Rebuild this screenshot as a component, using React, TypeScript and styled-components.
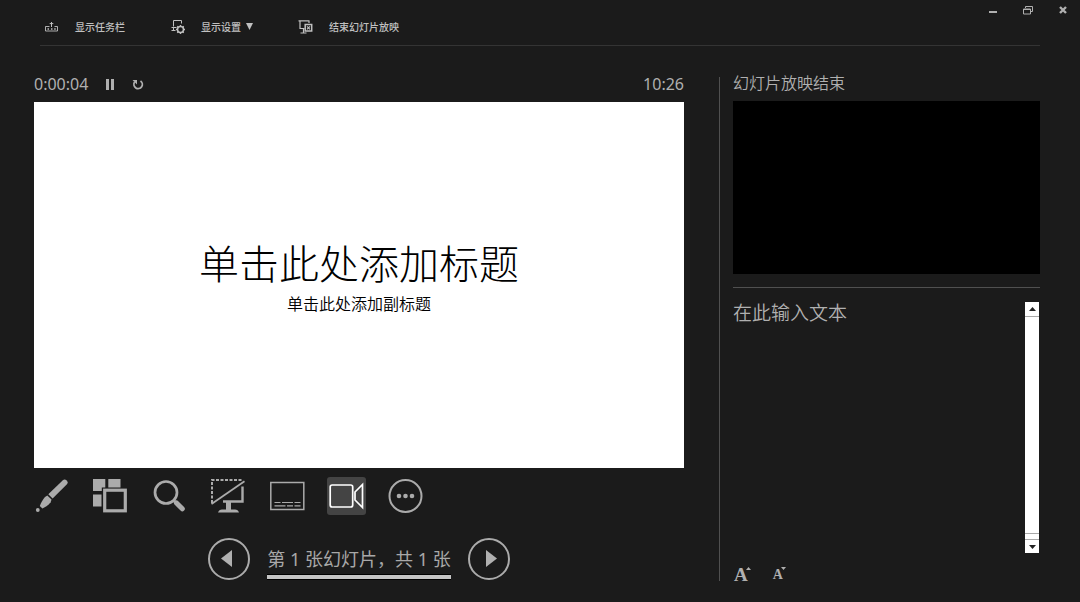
import React from "react";
import styled, { createGlobalStyle } from "styled-components";

const GlobalStyle = createGlobalStyle`
  *, *::before, *::after { box-sizing: border-box; }
  body {
    margin: 0;
    background: #1b1b1b;
    color: #b0b0b0;
    font-family: "Noto Sans", "Noto Sans CJK SC", sans-serif;
  }
  button {
    padding: 0;
    border: 0;
    background: none;
    color: inherit;
    font: inherit;
    cursor: pointer;
  }
  svg { display: block; flex: none; }
`;

const Page = styled.div`
  display: flex;
  flex-direction: column;
  min-height: 100vh;
`;

const Header = styled.header`
  display: grid;
  height: 46px;
`;

const Commands = styled.nav`
  grid-area: 1 / 1;
  display: flex;
  gap: 45px;
  margin: 0 40px;
  padding: 8px 4px 0;
  border-bottom: 1px solid #343434;
`;

const Command = styled.button`
  display: flex;
  align-items: center;
  gap: 15px;
  font-size: 10px;
  font-weight: 500;
  line-height: 16px;
  color: #c0c0c0;
`;

const Label = styled.span`
  display: flex;
  align-items: center;
  gap: 5px;
`;

const WindowControls = styled.div`
  grid-area: 1 / 1;
  place-self: start end;
  display: flex;
`;

const WindowButton = styled.button`
  display: grid;
  place-items: center;
  width: 35px;
  height: 20px;
`;

const Main = styled.main`
  flex: 1;
  display: grid;
  grid-template-columns: minmax(0, 650fr) minmax(0, 321fr);
  column-gap: 35px;
  padding: 26px 40px 21px 34px;
`;

const Stage = styled.section`
  display: flex;
  flex-direction: column;
`;

const Status = styled.div`
  display: flex;
  align-items: center;
  height: 24px;
  margin-bottom: 6px;
  font-size: 16px;
`;

const Clock = styled.time`
  margin-left: auto;
`;

const TimerButton = styled.button`
  display: grid;
  place-items: center;
  width: 28px;
  height: 24px;
`;

const TimerControls = styled.div`
  display: flex;
  margin-left: 8px;
`;

const Slide = styled.article`
  aspect-ratio: 16 / 9;
  display: flex;
  flex-direction: column;
  align-items: center;
  justify-content: center;
  padding-bottom: 22px;
  background: #fff;
  color: #000;
`;

const SlideTitle = styled.h1`
  margin: 0;
  font-family: "Noto Sans CJK SC", sans-serif;
  font-size: 40px;
  font-weight: 300;
  line-height: 58px;
`;

const SlideSubtitle = styled.p`
  margin: 0;
  font-family: "Noto Sans CJK SC", sans-serif;
  font-size: 16px;
  font-weight: 350;
  line-height: 24px;
`;

const Tools = styled.div`
  display: flex;
  gap: 20px;
  margin: 9px -2px 0;
`;

const Tool = styled.button<{ $active?: boolean }>`
  display: grid;
  place-items: center;
  width: 39px;
  height: 38px;
  border-radius: 3px;
  background: ${(p) => (p.$active ? "#444" : "transparent")};
  color: ${(p) => (p.$active ? "#fff" : "#ababab")};
`;

const Pager = styled.div`
  display: flex;
  justify-content: center;
  gap: 17px;
  margin-top: 23px;
`;

const PageButton = styled.button<{ $side: "left" | "right" }>`
  display: grid;
  place-items: center;
  width: 42px;
  height: 42px;
  border: 2px solid #ababab;
  border-radius: 50%;
  padding-${(p) => (p.$side === "left" ? "right" : "left")}: 5px;
`;

const Position = styled.button`
  display: flex;
  flex-direction: column;
  justify-content: flex-end;
  height: 42px;
  font-size: 18px;
  line-height: 28px;
  color: #a8a8a8;
`;

const Underline = styled.span`
  width: 100%;
  height: 6px;
  margin-top: 1px;
  border: solid #000;
  border-width: 1px 0;
  background: #c4c4c4;
`;

const Side = styled.aside`
  display: flex;
  flex-direction: column;
  margin-top: 5px;
  padding-left: 13px;
  border-left: 1px solid #505050;
`;

const SideTitle = styled.h2`
  margin: 0 0 11px;
  font-size: 16px;
  font-weight: 350;
  line-height: 13px;
`;

const Preview = styled.div`
  aspect-ratio: 16 / 9;
  background: #000;
`;

const Notes = styled.div`
  flex: 1;
  display: flex;
  margin-top: 13px;
  padding-top: 14px;
  border-top: 1px solid #505050;
`;

const NotesText = styled.textarea`
  flex: 1;
  min-width: 0;
  padding: 0;
  border: 0;
  outline: 0;
  resize: none;
  overflow: hidden;
  background: transparent;
  color: #b0b0b0;
  font: 350 19px/20px "Noto Sans CJK SC", sans-serif;
`;

const ScrollBar = styled.div`
  display: flex;
  flex-direction: column;
  width: 14px;
  margin-right: 1px;
  background: #fff;
`;

const ScrollButton = styled.button`
  display: grid;
  place-items: center;
  height: 14px;
  color: #222;
`;

const ScrollThumb = styled.div`
  flex: 1;
  margin-bottom: 5px;
  border: solid #a8a8a8;
  border-width: 1px 0;
`;

const ScrollEnd = styled(ScrollButton)`
  border-top: 1px solid #a8a8a8;
`;

const FontTools = styled.div`
  display: flex;
  gap: 22px;
  height: 28px;
  padding: 14px 1px 0;
`;

const FontButton = styled.button<{ $size: number }>`
  display: flex;
  align-items: flex-end;
  height: 14px;
  font-family: "Liberation Serif", serif;
  font-size: ${(p) => p.$size}px;
  font-weight: 700;
  line-height: 12px;

  svg { align-self: flex-start; margin-left: -2px; }
`;

const Triangle = ({ w, h, d }: { w: number; h: number; d: "up" | "down" | "left" | "right" }) => {
  const points = {
    up: `0,${h} ${w},${h} ${w / 2},0`,
    down: `0,0 ${w},0 ${w / 2},${h}`,
    left: `${w},0 ${w},${h} 0,${h / 2}`,
    right: `0,0 0,${h} ${w},${h / 2}`,
  }[d];
  return (
    <svg width={w} height={h} fill="currentColor" aria-hidden="true">
      <polygon points={points} />
    </svg>
  );
};

const TaskbarIcon = () => (
  <svg width="16" height="16" viewBox="0 0 16 16" fill="none" stroke="currentColor" aria-hidden="true">
    <path d="M5.500 7.500h-4v4.500h12v-4.500h-3" strokeWidth="0.900" />
    <path d="M7.500 8V3M5.700 4.600h3.600" />
    <path d="M3.500 10h1.500M7 10h1.500M10.200 10h1.500" strokeWidth="1.600" />
  </svg>
);

const SettingsIcon = () => (
  <svg width="16" height="16" viewBox="0 0 16 16" fill="none" stroke="currentColor" aria-hidden="true">
    <path d="M3.500 7.500v-6h8v3M1.500 8.500h5M1.500 11.500h4M3.500 8.500v3" />
    <circle cx="10.500" cy="10.500" r="3" strokeWidth="1.500" />
    <path d="M10.500 6v1.500M10.500 13.500V15M6 10.500h1.500M13.500 10.500H15M7.300 7.300l1.100 1.100M12.600 12.600l1.100 1.100M13.700 7.300l-1.100 1.100M8.400 12.600l-1.100 1.100" strokeWidth="1.400" />
  </svg>
);

const EndIcon = () => (
  <svg width="16" height="16" viewBox="0 0 16 16" fill="none" stroke="currentColor" aria-hidden="true">
    <path d="M0.500 1.900h11M2 2v7.500h4.500M11 2v2M5.500 9.500v4M2.500 14h6" strokeWidth="1.200" />
    <rect x="7.200" y="5.500" width="6.500" height="6.500" strokeWidth="1.500" />
    <path d="M9 7.300l3 3M12 7.300l-3 3" strokeWidth="1.200" />
  </svg>
);

const PenIcon = () => (
  <svg width="35" height="34" viewBox="-1 0 35 34" fill="currentColor" aria-hidden="true">
    <path d="M13.300 15.300L27.600 1.400a2.900 2.900 0 0 1 4.100 4.100L17.600 19.600z" />
    <path d="M12.300 16.400l4.200 4.200-0.800 2.700c-2.300 2.800-5.200 4.800-8.300 6.200l-2.600-2.600c1.200-3.300 3-6.500 5.200-9z" />
    <circle cx="2.800" cy="31" r="1.900" />
  </svg>
);

const SlidesIcon = () => (
  <svg width="35" height="34" viewBox="0 0 35 34" fill="currentColor" aria-hidden="true">
    <path d="M0 0h12.300v8.500h-3.500v3.500H0zM15.300 0H27.500v8.500H15.300zM0 15.500h8.500V27.500H0z" />
    <rect x="11.700" y="11.200" width="20.600" height="20.600" fill="none" stroke="currentColor" strokeWidth="3.200" />
  </svg>
);

const ZoomIcon = () => (
  <svg width="35" height="34" viewBox="-1 0 35 34" fill="none" stroke="currentColor" aria-hidden="true">
    <circle cx="13" cy="13.500" r="11" strokeWidth="2.700" />
    <path d="M20.700 21.500l3 3" strokeWidth="3" />
    <path d="M23.500 24l5.800 5.800" strokeWidth="5" strokeLinecap="round" />
  </svg>
);

const BlackScreenIcon = () => (
  <svg width="35" height="36" viewBox="1 0 35 36" fill="none" stroke="currentColor" aria-hidden="true">
    <path d="M2 25V2h31" strokeWidth="2" strokeDasharray="3 1.500" />
    <path d="M1.500 26L34.500 3.200" strokeWidth="1.800" />
    <path d="M32.500 8.500V23.500H13" strokeWidth="2.400" />
    <path d="M16 23.500h5v8h4q3 0 4 3H8q1-3 4-3h4z" fill="currentColor" stroke="none" />
  </svg>
);

const SubtitleIcon = () => (
  <svg width="35" height="36" viewBox="1 0 35 36" fill="none" stroke="currentColor" aria-hidden="true">
    <rect x="1.800" y="4.500" width="33" height="27" strokeWidth="1.500" />
    <path d="M5.500 24.500h6M13 24.500h11M25.500 24.500h6M5.500 27.800h11M18 27.800h6M25.500 27.800h6" strokeWidth="1.200" />
  </svg>
);

const CameraIcon = () => (
  <svg width="35" height="36" viewBox="0 0 35 36" fill="none" stroke="currentColor" strokeWidth="1.700" aria-hidden="true">
    <rect x="1.200" y="7" width="22.500" height="22" rx="2" />
    <path d="M33.500 6.500v23l-7.500-7.500v-8z" />
  </svg>
);

const MoreIcon = () => (
  <svg width="35" height="36" viewBox="0 0 35 36" fill="currentColor" aria-hidden="true">
    <circle cx="17.500" cy="18" r="16" fill="none" stroke="currentColor" strokeWidth="2" />
    <circle cx="11" cy="18" r="2.300" />
    <circle cx="17.500" cy="18" r="2.300" />
    <circle cx="24" cy="18" r="2.300" />
  </svg>
);

const tools = [
  { name: "笔", icon: <PenIcon /> },
  { name: "查看所有幻灯片", icon: <SlidesIcon /> },
  { name: "放大", icon: <ZoomIcon /> },
  { name: "黑屏", icon: <BlackScreenIcon /> },
  { name: "字幕", icon: <SubtitleIcon /> },
  { name: "相机", icon: <CameraIcon />, active: true },
  { name: "更多", icon: <MoreIcon /> },
];

export default function App() {
  return (
    <Page>
      <GlobalStyle />
      <Header>
        <Commands>
          <Command>
            <TaskbarIcon />
            <Label>显示任务栏</Label>
          </Command>
          <Command>
            <SettingsIcon />
            <Label>
              显示设置
              <Triangle w={7} h={7} d="down" />
            </Label>
          </Command>
          <Command>
            <EndIcon />
            <Label>结束幻灯片放映</Label>
          </Command>
        </Commands>
        <WindowControls>
          <WindowButton aria-label="最小化">
            <svg width="10" height="10" stroke="currentColor" strokeWidth="2"><path d="M1 7h8" /></svg>
          </WindowButton>
          <WindowButton aria-label="还原">
            <svg width="10" height="10" fill="none" stroke="currentColor">
              <path d="M2.500 3V1.500h7v5H8" />
              <path d="M0.500 4h7v5h-7z" />
              <path d="M0.500 4.500h7" />
            </svg>
          </WindowButton>
          <WindowButton aria-label="关闭">
            <svg width="10" height="10" stroke="currentColor" strokeWidth="2.400"><path d="M2 2l6 6M8 2L2 8" /></svg>
          </WindowButton>
        </WindowControls>
      </Header>
      <Main>
        <Stage>
          <Status>
            <span>0:00:04</span>
            <TimerControls>
              <TimerButton aria-label="暂停">
                <svg width="8" height="11" fill="currentColor"><path d="M0 0h3v11H0zM5 0h3v11H5z" /></svg>
              </TimerButton>
              <TimerButton aria-label="重新开始">
                <svg width="12" height="12" viewBox="0 0 12 12" fill="none" stroke="currentColor" strokeWidth="1.800">
                  <path d="M8.500 2.900A4.200 4.200 0 1 1 2.600 4.100" />
                  <path d="M0.500 2h4.500v4.500z" fill="currentColor" stroke="none" />
                </svg>
              </TimerButton>
            </TimerControls>
            <Clock>10:26</Clock>
          </Status>
          <Slide>
            <SlideTitle>单击此处添加标题</SlideTitle>
            <SlideSubtitle>单击此处添加副标题</SlideSubtitle>
          </Slide>
          <Tools>
            {tools.map((t) => (
              <Tool key={t.name} aria-label={t.name} $active={t.active}>
                {t.icon}
              </Tool>
            ))}
          </Tools>
          <Pager>
            <PageButton $side="left" aria-label="上一张">
              <Triangle w={11} h={17} d="left" />
            </PageButton>
            <Position>
              <span>第 1 张幻灯片，共 1 张</span>
              <Underline />
            </Position>
            <PageButton $side="right" aria-label="下一张">
              <Triangle w={11} h={17} d="right" />
            </PageButton>
          </Pager>
        </Stage>
        <Side>
          <SideTitle>幻灯片放映结束</SideTitle>
          <Preview />
          <Notes>
            <NotesText aria-label="备注" defaultValue="在此输入文本" />
            <ScrollBar>
              <ScrollButton aria-label="向上滚动">
                <Triangle w={7} h={4} d="up" />
              </ScrollButton>
              <ScrollThumb />
              <ScrollEnd aria-label="向下滚动">
                <Triangle w={7} h={4} d="down" />
              </ScrollEnd>
            </ScrollBar>
          </Notes>
          <FontTools>
            <FontButton $size={19} aria-label="放大文本">
              A<Triangle w={5} h={3} d="up" />
            </FontButton>
            <FontButton $size={14} aria-label="缩小文本">
              A<Triangle w={5} h={3} d="down" />
            </FontButton>
          </FontTools>
        </Side>
      </Main>
    </Page>
  );
}
